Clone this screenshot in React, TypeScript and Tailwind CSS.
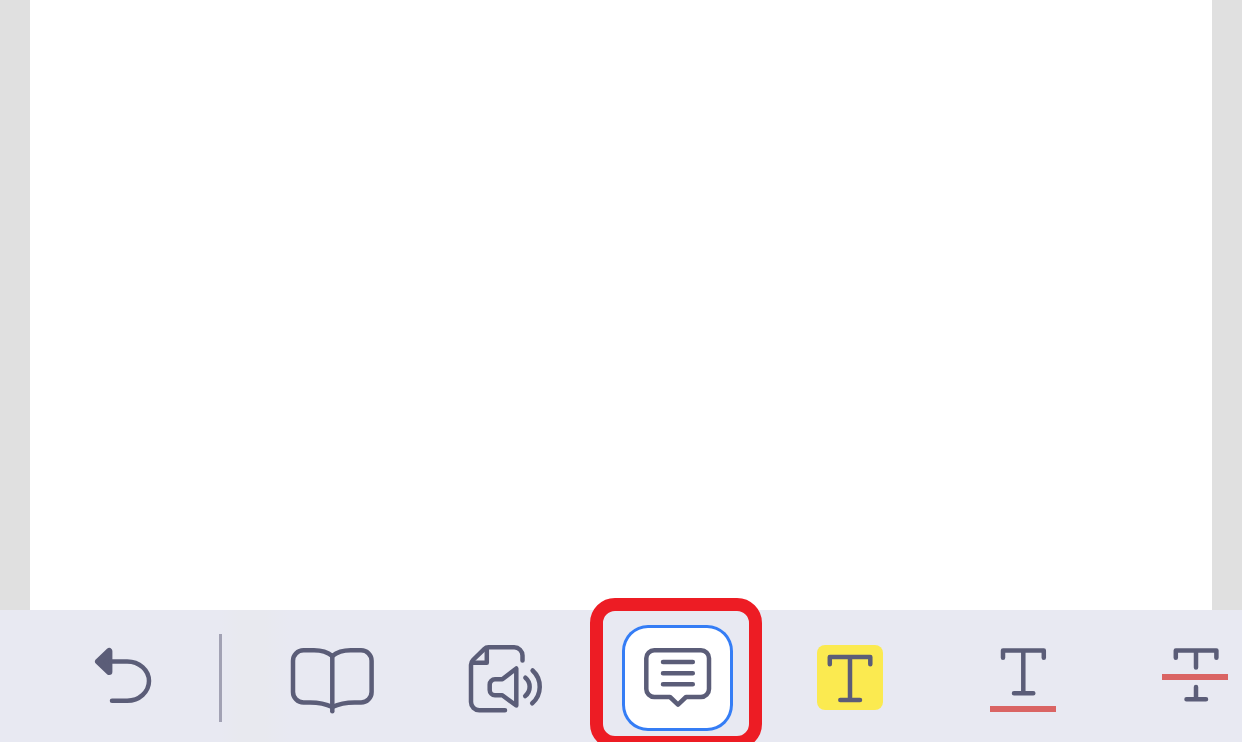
import { useState, type ReactNode } from "react";

function Icon({ children }: { children: ReactNode }) {
  return (
    <svg
      aria-hidden="true"
      viewBox="0 0 91 80"
      className="h-20 w-[91px] shrink-0"
      fill="none"
      stroke="#5b5d78"
      strokeWidth="4.5"
      strokeLinecap="round"
      strokeLinejoin="round"
    >
      {children}
    </svg>
  );
}

const undoIcon = (
  <Icon>
    <path d="M20.2 23.5 31.2 13.2V33.8Z" fill="#5b5d78" strokeWidth="6.4" />
    <path d="M32 23.4H49.2A21.8 19.7 0 0 1 49.2 62.8H34" />
  </Icon>
);

const tools = [
  {
    label: "Reading view",
    icon: (
      <Icon>
        <path d="M46.3 18C42 14.5 36 12.3 28 12.3H17.5A10.5 10.5 0 0 0 7 22.8V54A10.5 10.5 0 0 0 17.5 64.5H24C33 64.5 40 66 46.3 69" />
        <path d="M46.3 18C50.6 14.5 56.6 12.3 64.6 12.3H75.1A10.5 10.5 0 0 1 85.6 22.8V54A10.5 10.5 0 0 1 75.1 64.5H68.6C59.6 64.5 52.6 66 46.3 69" />
        <path d="M46.3 18V73.3" />
      </Icon>
    ),
  },
  {
    label: "Read aloud",
    icon: (
      <Icon>
        <path d="M63.5 22.5V17.6A8.3 8.3 0 0 0 55.2 9.3H29.5Q27 9.3 25.2 11.1L14 22Q12 24 12 26.8V64A8.3 8.3 0 0 0 20.3 72.3H46" />
        <path d="M27.8 10.5V24.8H13.5" />
        <path d="M43.3 41.3 57.3 30.5V67.5L43.3 57.3H36A5.3 5.3 0 0 1 30.7 52V46.6A5.3 5.3 0 0 1 36 41.3Z" />
        <path d="M66.4 39.7A11.8 11.8 0 0 1 66.2 58" />
        <path d="M73.6 32.5A22 22 0 0 1 73.2 65.3" />
      </Icon>
    ),
  },
  {
    label: "Comment",
    icon: (
      <Icon>
        <path d="M22.3 12.3H69A8 8 0 0 1 77 20.3V51A8 8 0 0 1 69 59H54L46 66.6 38 59H22.3A8 8 0 0 1 14.3 51V20.3A8 8 0 0 1 22.3 12.3Z" />
        <path d="M31 24H60.8M31 35.3H60.8M31 46.3H60.8" />
      </Icon>
    ),
  },
  {
    label: "Highlight",
    icon: (
      <Icon>
        <rect x="12" y="7" width="66" height="65" rx="8" fill="#fbea50" stroke="none" />
        <path d="M24.8 26.2V19H65.3V26.2M45 19V62M35.3 62H55" />
      </Icon>
    ),
  },
  {
    label: "Underline",
    icon: (
      <Icon>
        <path d="M25 19.7V12.5H65.8V19.7M45.3 12.5V55.3M36 55.3H55.3" />
        <path d="M12 71H78" stroke="#da6464" strokeWidth="6" strokeLinecap="butt" />
      </Icon>
    ),
  },
  {
    label: "Strikethrough",
    icon: (
      <Icon>
        <path d="M24.8 19.7V12.5H65.4V19.7M45 12.5V29.5M45 49V61.3M35.5 61.3H55" />
        <path d="M11 39H77" stroke="#da6464" strokeWidth="6" strokeLinecap="butt" />
      </Icon>
    ),
  },
];

export default function App() {
  const [active, setActive] = useState("Comment");

  return (
    <div className="flex h-screen flex-col overflow-hidden bg-[#e0e0e0]">
      <main aria-label="Document" className="mx-[30px] min-h-0 flex-1 bg-white" />
      <div
        role="toolbar"
        aria-label="Annotation tools"
        className="flex h-33 shrink-0 items-center bg-[#e8e9f2] bg-[linear-gradient(to_right,#e8e9f2_220px,#e8e9ef_240px,#e8e9ef_264px,#e8e9f2_290px)] pt-1 pl-17"
      >
        <button type="button" aria-label="Undo" className="flex h-[106px] w-[111px] shrink-0 items-center justify-center">
          {undoIcon}
        </button>
        <div role="separator" className="mr-[54px] ml-10 h-[88px] w-[3px] shrink-0 bg-[#a2a2b4]" />
        <div className="flex gap-[62px]">
          {tools.map(({ label, icon }) => {
            const selected = label === active;
            return (
              <button
                key={label}
                type="button"
                aria-label={label}
                aria-pressed={selected}
                onClick={() => setActive(label)}
                className={
                  selected
                    ? "relative flex h-[106px] w-[111px] shrink-0 items-center justify-center rounded-[26px] bg-white inset-ring-3 inset-ring-[#357df5]"
                    : "relative flex h-[106px] w-[111px] shrink-0 items-center justify-center"
                }
              >
                {icon}
                {label === "Comment" && (
                  <span className="pointer-events-none absolute -top-[27px] -left-8 h-[151px] w-[172px] rounded-[25px] border-[13px] border-[#ed1c24]" />
                )}
              </button>
            );
          })}
        </div>
      </div>
    </div>
  );
}
